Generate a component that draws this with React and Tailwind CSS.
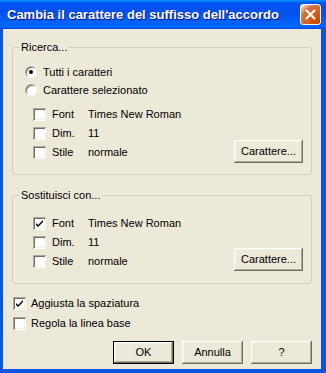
import React from 'react';

// classic 3D edges used by the dialog controls
const BTN = 'bg-[#ece9d8] shadow-[inset_-1px_-1px_#716f64,inset_1px_1px_#ffffff,inset_-2px_-2px_#aca899,inset_2px_2px_#f1efe2]';
const SUNKEN = 'bg-white shadow-[inset_1px_1px_#aca899,inset_-1px_-1px_#ffffff,inset_2px_2px_#716f64,inset_-2px_-2px_#f1efe2]';

function Check({ checked }) {
    return (
        <div className={`w-[13px] h-[13px] shrink-0 ${SUNKEN} flex items-center justify-center`}>
            {checked && (
                <svg width="13" height="13" viewBox="0 0 13 13">
                    <path d="M3 6 L3 8 L5 10 L10 5 L10 3 L5 8 Z" fill="#000" />
                </svg>
            )}
        </div>
    );
}

function Radio({ checked }) {
    return (
        <div className="w-[12px] h-[12px] shrink-0 rounded-full bg-white border border-t-[#aca899] border-l-[#aca899] border-b-white border-r-white shadow-[inset_1px_1px_#716f64] flex items-center justify-center">
            {checked && <div className="w-[4px] h-[4px] rounded-full bg-black" />}
        </div>
    );
}

function OptRow({ label, value, checked }) {
    return (
        <div className="h-[19px] flex items-center pl-[20px]">
            <Check checked={checked} />
            <span className="ml-[6px] w-[36px]">{label}</span>
            <span>{value}</span>
        </div>
    );
}

function Group({ title, children, className }) {
    return (
        <fieldset className={`border border-[#d0d0bf] rounded-[3px] p-0 ${className}`}>
            <legend className="ml-[6px] px-[2px] leading-[13px]">{title}</legend>
            {children}
        </fieldset>
    );
}

function Button({ children, def }) {
    return (
        <div className={`w-[61px] h-[23px] flex items-center justify-center ${def ? 'border border-black' : ''} ${BTN}`}>
            {children}
        </div>
    );
}

export default function App() {
    return (
        <div className="w-[326px] h-[373px] flex flex-col bg-[#0a55e6] font-['Liberation_Sans',Arial,sans-serif] text-[11px] text-black select-none">

            {/* Title bar */}
            <div className="h-[29px] shrink-0 flex items-center justify-between pl-[7px] pr-[5px] bg-[linear-gradient(180deg,#0997ff_0%,#0053ee_10%,#0050ee_40%,#0066ff_88%,#0066ff_93%,#005bff_96%,#003dd7_100%)]">
                <span className="text-white font-bold text-[13px] [text-shadow:1px_1px_0_#0f1089]">
                    Cambia il carattere del suffisso dell'accordo
                </span>
                <div className="w-[21px] h-[21px] rounded-[3px] border border-white bg-[radial-gradient(circle_at_90%_90%,#cc4600_0%,#dc6527_55%,#cd7546_70%,#ffccb2_90%,#ffffff_100%)] flex items-center justify-center">
                    <svg width="13" height="13" viewBox="0 0 13 13">
                        <path d="M2 2 L11 11 M11 2 L2 11" stroke="#fff" strokeWidth="2.2" />
                    </svg>
                </div>
            </div>

            {/* Body */}
            <div className="flex-1 ml-[3px] mr-[5px] mb-[4px] bg-[#ece9d8] flex flex-col px-[9px] pt-[12px] pb-[5px]">

                <Group title="Ricerca...">
                    <div className="pt-[9px] pl-[12px]">
                        <div className="h-[18px] flex items-center gap-[6px]">
                            <Radio checked />
                            <span>Tutti i caratteri</span>
                        </div>
                        <div className="h-[18px] flex items-center gap-[6px]">
                            <Radio />
                            <span>Carattere selezionato</span>
                        </div>
                    </div>
                    <div className="flex justify-between items-start mt-[6px] pr-[8px] pb-[11px]">
                        <div>
                            <OptRow label="Font" value="Times New Roman" />
                            <OptRow label="Dim." value="11" />
                            <OptRow label="Stile" value="normale" />
                        </div>
                        <div className="mt-[35px] w-[69px] h-[23px] flex items-center justify-center bg-[#ece9d8] shadow-[inset_-1px_-1px_#716f64,inset_1px_1px_#ffffff,inset_-2px_-2px_#aca899,inset_2px_2px_#f1efe2]">
                            Carattere...
                        </div>
                    </div>
                </Group>

                <Group title="Sostituisci con..." className="mt-[14px]">
                    <div className="flex justify-between items-start pt-[12px] pr-[8px] pb-[12px]">
                        <div>
                            <OptRow label="Font" value="Times New Roman" checked />
                            <OptRow label="Dim." value="11" />
                            <OptRow label="Stile" value="normale" />
                        </div>
                        <div className="mt-[34px] w-[69px] h-[23px] flex items-center justify-center bg-[#ece9d8] shadow-[inset_-1px_-1px_#716f64,inset_1px_1px_#ffffff,inset_-2px_-2px_#aca899,inset_2px_2px_#f1efe2]">
                            Carattere...
                        </div>
                    </div>
                </Group>

                <div className="mt-[9px] pl-[1px]">
                    <div className="h-[20px] flex items-center gap-[5px]">
                        <Check checked />
                        <span>Aggiusta la spaziatura</span>
                    </div>
                    <div className="h-[20px] flex items-center gap-[5px]">
                        <Check />
                        <span>Regola la linea base</span>
                    </div>
                </div>

                <div className="mt-[8px] flex justify-end gap-[8px]">
                    <Button def>OK</Button>
                    <Button>Annulla</Button>
                    <Button>?</Button>
                </div>
            </div>
        </div>
    );
}
